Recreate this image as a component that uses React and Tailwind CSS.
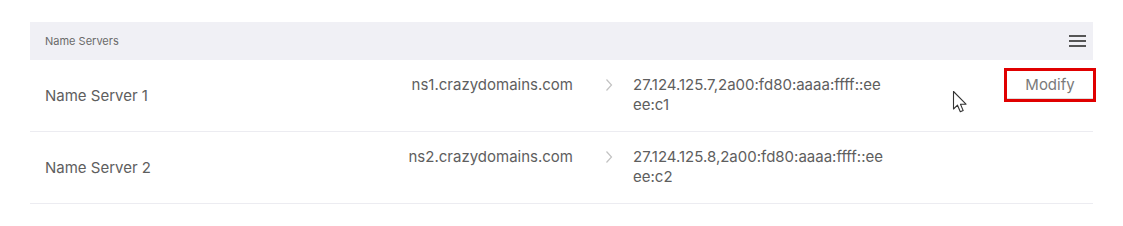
import React from "react";

const font = { fontFamily: "Inter, 'Noto Sans', sans-serif" };

function Chevron() {
  return (
    <svg width="8" height="14" viewBox="0 0 8 14" className="block">
      <polyline points="1.5,1.5 6.5,7 1.5,12.5" fill="none" stroke="#c2c2c2" strokeWidth="1.2" />
    </svg>
  );
}

function Row({ name, ns, ip1, ip2, modify }) {
  return (
    <div className="relative flex h-[72px] border-b border-[#ececf1] pl-[15px] text-[15px] leading-[20px] text-[#5e5e5e]">
      <div className="flex w-[255px] items-center">{name}</div>
      <div className="w-[273px] pt-[15px] text-right">{ns}</div>
      <div className="ml-[32px] w-[8px] pt-[18px]">
        <Chevron />
      </div>
      <div className="ml-[20px] w-[270px] pt-[15px]">
        <div>{ip1}</div>
        <div>{ip2}</div>
      </div>
      <div className="flex flex-1 justify-end pt-[11px]">
        {modify && (
          <button className="h-[28px] w-[86px] border-b border-[#dcdcdc] text-[15px] text-[#7a7a7a] outline outline-[3px] outline-[#e00000]">
            Modify
          </button>
        )}
      </div>
    </div>
  );
}

function Cursor() {
  return (
    <svg className="absolute left-[952px] top-[90px]" width="16" height="26" viewBox="0 0 16 26">
      <path
        d="M1.5 1.5 L1.5 19 L5.5 15.2 L8.3 21.8 L11.2 20.6 L8.5 14.2 L14 14.2 Z"
        fill="#fff"
        stroke="#333"
        strokeWidth="1.1"
        strokeLinejoin="round"
      />
    </svg>
  );
}

export default function App() {
  return (
    <div className="relative h-[226px] w-[1123px] bg-white pt-[22px]" style={font}>
      <div className="ml-[30px] w-[1063px]">
        <div className="flex h-[38px] items-center justify-between bg-[#f0f0f5] pl-[15px] pr-[7px]">
          <span className="text-[11px] text-[#6a6a6a]">Name Servers</span>
          <div className="flex w-[17px] flex-col gap-[3.5px]">
            <span className="block h-[1.6px] bg-[#555]" />
            <span className="block h-[1.6px] bg-[#555]" />
            <span className="block h-[1.6px] bg-[#555]" />
          </div>
        </div>
        <Row
          name="Name Server 1"
          ns="ns1.crazydomains.com"
          ip1="27.124.125.7,2a00:fd80:aaaa:ffff::ee"
          ip2="ee:c1"
          modify
        />
        <Row
          name="Name Server 2"
          ns="ns2.crazydomains.com"
          ip1="27.124.125.8,2a00:fd80:aaaa:ffff::ee"
          ip2="ee:c2"
        />
      </div>
      <Cursor />
    </div>
  );
}
